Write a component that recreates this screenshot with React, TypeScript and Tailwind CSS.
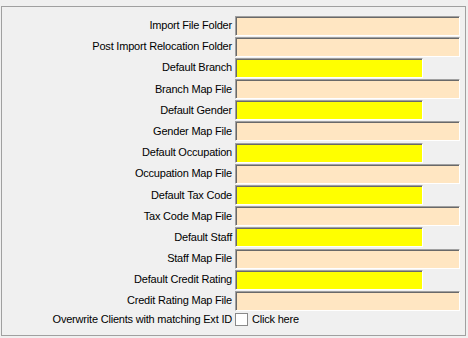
const rows: { label: string; kind: 'map' | 'default' }[] = [
  { label: 'Import File Folder', kind: 'map' },
  { label: 'Post Import Relocation Folder', kind: 'map' },
  { label: 'Default Branch', kind: 'default' },
  { label: 'Branch Map File', kind: 'map' },
  { label: 'Default Gender', kind: 'default' },
  { label: 'Gender Map File', kind: 'map' },
  { label: 'Default Occupation', kind: 'default' },
  { label: 'Occupation Map File', kind: 'map' },
  { label: 'Default Tax Code', kind: 'default' },
  { label: 'Tax Code Map File', kind: 'map' },
  { label: 'Default Staff', kind: 'default' },
  { label: 'Staff Map File', kind: 'map' },
  { label: 'Default Credit Rating', kind: 'default' },
  { label: 'Credit Rating Map File', kind: 'map' },
];

function Label({ text }: { text: string }) {
  return (
    <span className="w-[230px] shrink-0 text-right whitespace-nowrap">{text}</span>
  );
}

export default function App() {
  return (
    <div
      className="w-[468px] h-[338px] bg-[#f0f0f0] pt-[6px] pl-[1px] text-[11px] tracking-[-0.2px] text-black leading-none"
      style={{ fontFamily: '"Liberation Sans", Arial, sans-serif' }}
    >
      <div className="w-[465px] h-[330px] border border-[#a0a0a0] pt-[8.5px] flex flex-col gap-[1.2px]">
        {rows.map((r) => (
          <div key={r.label} className="flex items-center h-[20px]">
            <Label text={r.label} />
            <div
              className={
                'ml-[3px] h-[20px] border border-t-[#a0a0a0] border-l-[#a0a0a0] border-b-white border-r-white shadow-[inset_1px_1px_0_#696969] ' +
                (r.kind === 'map' ? 'w-[225px] bg-[#ffe6c2]' : 'w-[188px] bg-[#ffff00]')
              }
            />
          </div>
        ))}
        <div className="flex items-center h-[14px]">
          <Label text="Overwrite Clients with matching Ext ID" />
          <span className="ml-[3px] w-[13px] h-[13px] bg-white border border-[#8a8a8a] shrink-0" />
          <span className="ml-[4px] whitespace-nowrap">Click here</span>
        </div>
      </div>
    </div>
  );
}
